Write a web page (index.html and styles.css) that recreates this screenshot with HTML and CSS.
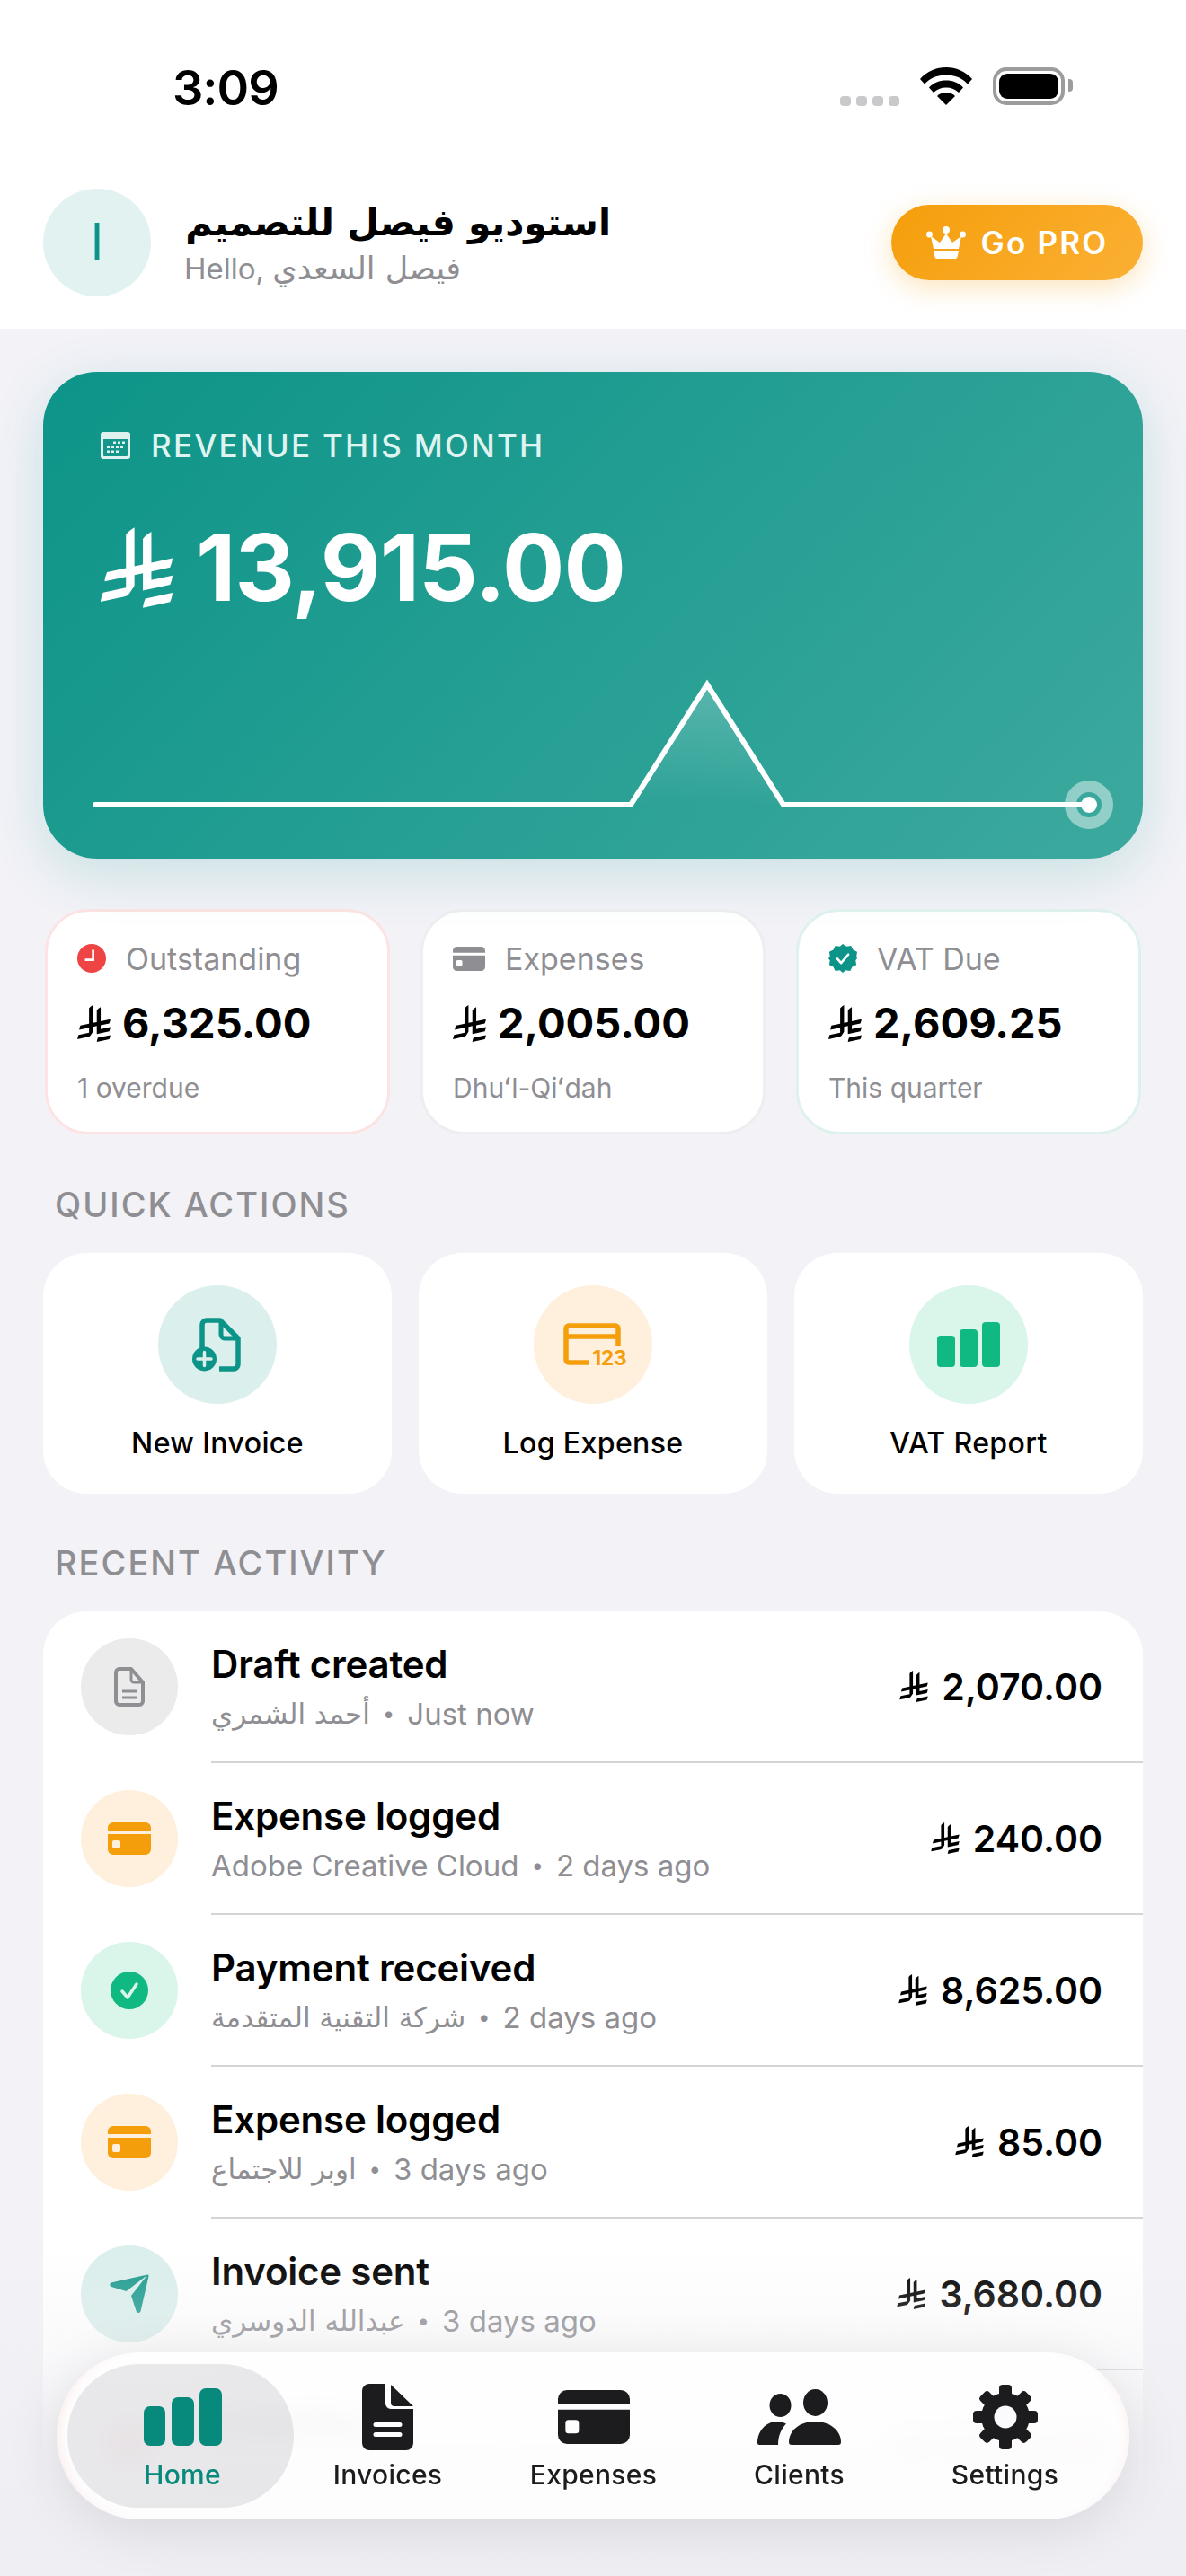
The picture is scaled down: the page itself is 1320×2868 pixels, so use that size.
FILE: index.html
```html
<!DOCTYPE html>
<html lang="en">
<head>
  <meta charset="UTF-8">
  <title>Home</title>
  <link rel="stylesheet" href="styles.css">
</head>

<body>
<svg class="hidden">
  <symbol id="sar" viewBox="0 0 1124.14 1256.39">
    <path d="M699.62,1113.02h0c-20.06,44.48-33.32,92.75-38.4,143.37l424.51-90.24c20.06-44.47,33.31-92.75,38.4-143.37l-424.51,90.24Z"/>
    <path d="M1085.73,895.8c20.06-44.47,33.32-92.75,38.4-143.37l-330.68,70.33v-135.2l292.27-62.11c20.06-44.47,33.32-92.75,38.4-143.37l-330.68,70.27V66.13c-50.67,28.45-95.67,66.32-132.25,110.99v403.35l-132.25,28.11V0c-50.67,28.44-95.67,66.32-132.25,110.99v525.69l-295.91,62.88c-20.06,44.47-33.33,92.75-38.42,143.37l334.33-71.05v170.26l-358.3,76.14c-20.06,44.47-33.32,92.75-38.4,143.37l375.04-79.7c30.53-6.35,56.77-24.4,73.83-49.24l68.78-101.97v-.02c7.14-10.55,11.3-23.27,11.3-36.97v-149.98l132.25-28.11v270.4l424.53-90.28Z"/>
  </symbol>
  <symbol id="card" viewBox="0 0 48 36">
    <path d="M0 9V6a6 6 0 0 1 6-6h36a6 6 0 0 1 6 6v3z"/>
    <path fill-rule="evenodd" d="M0 13h48v17a6 6 0 0 1-6 6H6a6 6 0 0 1-6-6zM7 20a2 2 0 0 0-2 2v5a2 2 0 0 0 2 2h5a2 2 0 0 0 2-2v-5a2 2 0 0 0-2-2z"/>
  </symbol>
</svg>

<div class="app">
  <div class="top">
    <div class="status-bar">
      <span class="time">3:09</span>
      <div class="status-icons">
        <span class="signal"><i></i><i></i><i></i><i></i></span>
        <svg class="wifi" viewBox="0 0 58 42">
          <path d="M29 0C18 0 8 4 0 13l5 5.500c6-6.500 14-10 24-10s18 3.500 24 10l5-5.500C50 4 40 0 29 0z"/>
          <path d="M29 14.500c-7.500 0-14 2.500-19 8l5 5.500c3.500-3.500 8.500-5.500 14-5.500s10.500 2 14 5.500l5-5.500c-5-5.500-11.500-8-19-8z"/>
          <path d="M29 28c-4 0-7.500 1.500-10 4l10 10 10-10c-2.500-2.500-6-4-10-4z"/>
        </svg>
        <span class="battery"><i></i></span>
      </div>
    </div>
    <header class="header">
      <div class="avatar"><span>ا</span></div>
      <div class="header-text">
        <div class="studio" dir="rtl">استوديو فيصل للتصميم</div>
        <div class="hello">Hello, <span class="ar">فيصل السعدي</span></div>
      </div>
      <button class="go-pro">
        <svg class="crown" viewBox="0 0 44 36" fill="#fff">
          <circle cx="22" cy="4" r="4"/><circle cx="3.500" cy="9" r="3.500"/><circle cx="40.500" cy="9" r="3.500"/>
          <path d="M22 8l7 10 10-7-3 14H8L5 11l10 7z"/>
          <path d="M8 28h28l-1.500 6a2.500 2.500 0 0 1-2.500 2H12a2.500 2.500 0 0 1-2.500-2z"/>
        </svg>
        Go PRO
      </button>
    </header>
  </div>

  <main class="content">
    <section class="hero">
      <div class="hero-label">
        <svg class="cal" viewBox="0 0 33 30">
          <path fill="#e0f2f0" d="M3 0h27a3 3 0 0 1 3 3v24a3 3 0 0 1-3 3H3a3 3 0 0 1-3-3V3a3 3 0 0 1 3-3z"/>
          <path fill="#14968a" d="M3 8h27v18a1 1 0 0 1-1 1H4a1 1 0 0 1-1-1z"/>
          <g fill="#e0f2f0">
            <rect x="14" y="10.500" width="3" height="2.500"/><rect x="19" y="10.500" width="3" height="2.500"/><rect x="24" y="10.500" width="3" height="2.500"/>
            <rect x="7" y="15.500" width="3" height="2.500"/><rect x="12" y="15.500" width="3" height="2.500"/><rect x="17" y="15.500" width="3" height="2.500"/><rect x="22" y="15.500" width="3" height="2.500"/>
            <rect x="7" y="20.500" width="3" height="2.500"/><rect x="12" y="20.500" width="3" height="2.500"/><rect x="17" y="20.500" width="3" height="2.500"/>
          </g>
        </svg>
        REVENUE THIS MONTH
      </div>
      <div class="hero-amount">
        <svg class="sar sar-hero"><use href="#sar"/></svg>
        13,915.00
      </div>
      <svg class="chart" viewBox="0 0 1224 542">
        <defs>
          <linearGradient id="peak" x1="0" y1="0" x2="0" y2="1">
            <stop offset="0" stop-color="#fff" stop-opacity=".22"/>
            <stop offset="1" stop-color="#fff" stop-opacity="0"/>
          </linearGradient>
        </defs>
        <path d="M654 482L739 348L824 482z" fill="url(#peak)"/>
        <path d="M58 482H654L739 348L824 482H1164" fill="none" stroke="#fff" stroke-width="6" stroke-linecap="round"/>
        <circle cx="1164" cy="482" r="20.500" fill="none" stroke="#fff" stroke-opacity=".45" stroke-width="13"/>
        <circle cx="1164" cy="482" r="9" fill="#fff"/>
      </svg>
    </section>

    <section class="stats">
      <div class="stat stat-red">
        <div class="stat-label">
          <svg class="stat-icon" viewBox="0 0 30 30"><circle cx="15" cy="15" r="15" fill="#ef4444"/><path d="M16.500 6v10.500H8" fill="none" stroke="#fff" stroke-width="2.500"/></svg>
          Outstanding
        </div>
        <div class="stat-value"><svg class="sar sar-stat"><use href="#sar"/></svg>6,325.00</div>
        <div class="stat-sub">1 overdue</div>
      </div>
      <div class="stat">
        <div class="stat-label">
          <svg class="stat-icon card-grey"><use href="#card"/></svg>
          Expenses
        </div>
        <div class="stat-value"><svg class="sar sar-stat"><use href="#sar"/></svg>2,005.00</div>
        <div class="stat-sub">Dhuʻl-Qiʻdah</div>
      </div>
      <div class="stat stat-teal">
        <div class="stat-label">
          <svg class="stat-icon" viewBox="0 0 34 34">
            <path fill="#0d9488" d="M17 0l4.500 3 5.300-.800 2.400 4.800 4.800 2.400-.800 5.300L34 17l-1.800 2.300.800 5.300-4.800 2.400-2.400 4.800-5.300-.800L17 34l-3.500-3-5.300.800L5.800 27 1 24.600l.8-5.300L0 17l1.800-2.300L1 9.400 5.800 7l2.400-4.800 5.300.800z"/>
            <path d="M10.500 17.500l4.500 5 8.500-10" fill="none" stroke="#fff" stroke-width="2.800" stroke-linecap="round" stroke-linejoin="round"/>
          </svg>
          VAT Due
        </div>
        <div class="stat-value"><svg class="sar sar-stat"><use href="#sar"/></svg>2,609.25</div>
        <div class="stat-sub">This quarter</div>
      </div>
    </section>

    <h2 class="section-title">QUICK ACTIONS</h2>
    <section class="actions">
      <div class="action">
        <div class="action-circle bg-teal">
          <svg class="action-icon" viewBox="0 0 56 60">
            <path d="M11 34V8a5 5 0 0 1 5-5h15l20 20v29a5 5 0 0 1-5 5H30" fill="none" stroke="#0d9488" stroke-width="5.500" stroke-linejoin="round"/>
            <path d="M32 3v16a4 4 0 0 0 4 4h15" fill="none" stroke="#0d9488" stroke-width="5"/>
            <circle cx="13.500" cy="46" r="13.500" fill="#0d9488"/>
            <path d="M13.500 38.500v15M6 46h15" stroke="#dcefec" stroke-width="3.500" stroke-linecap="round"/>
          </svg>
        </div>
        <div class="action-name">New Invoice</div>
      </div>
      <div class="action">
        <div class="action-circle bg-orange">
          <svg class="action-icon card-123" viewBox="0 0 70 49">
            <path d="M29 44H6a3 3 0 0 1-3-3V6a3 3 0 0 1 3-3h52a3 3 0 0 1 3 3v20" fill="none" stroke="#f59e0b" stroke-width="5.500"/>
            <path d="M3 15h58" stroke="#f59e0b" stroke-width="5.500"/>
            <text x="70" y="47" class="num-123">123</text>
          </svg>
        </div>
        <div class="action-name">Log Expense</div>
      </div>
      <div class="action">
        <div class="action-circle bg-green">
          <svg class="action-icon bars" viewBox="0 0 70 50" fill="#10b981">
            <rect x="0" y="15" width="20" height="35" rx="4"/><rect x="25" y="8" width="20" height="42" rx="4"/><rect x="50" y="0" width="20" height="50" rx="4"/>
          </svg>
        </div>
        <div class="action-name">VAT Report</div>
      </div>
    </section>

    <h2 class="section-title section-recent">RECENT ACTIVITY</h2>
    <section class="activity">
      <div class="row">
        <div class="row-circle bg-grey">
          <svg class="row-icon" viewBox="0 0 36 44">
            <path d="M3 6a4 4 0 0 1 4-4h13l13 15v21a4 4 0 0 1-4 4H7a4 4 0 0 1-4-4z" fill="none" stroke="#8e8e93" stroke-width="4" stroke-linejoin="round"/>
            <path d="M20 2v12a3 3 0 0 0 3 3h10M10 27h16M10 34h16" fill="none" stroke="#8e8e93" stroke-width="3"/>
          </svg>
        </div>
        <div class="row-main">
          <div class="row-title">Draft created</div>
          <div class="row-sub"><span class="ar">أحمد الشمري</span><b>•</b>Just now</div>
        </div>
        <div class="row-amount"><svg class="sar sar-row"><use href="#sar"/></svg>2,070.00</div>
      </div>
      <div class="row">
        <div class="row-circle bg-orange"><svg class="row-card"><use href="#card"/></svg></div>
        <div class="row-main">
          <div class="row-title">Expense logged</div>
          <div class="row-sub">Adobe Creative Cloud<b>•</b>2 days ago</div>
        </div>
        <div class="row-amount"><svg class="sar sar-row"><use href="#sar"/></svg>240.00</div>
      </div>
      <div class="row">
        <div class="row-circle bg-green">
          <svg class="row-icon check" viewBox="0 0 42 42"><circle cx="21" cy="21" r="21" fill="#10b981"/><path d="M13 22l6 7 10-15" fill="none" stroke="#dcf5ea" stroke-width="3.500" stroke-linecap="round" stroke-linejoin="round"/></svg>
        </div>
        <div class="row-main">
          <div class="row-title">Payment received</div>
          <div class="row-sub"><span class="ar">شركة التقنية المتقدمة</span><b>•</b>2 days ago</div>
        </div>
        <div class="row-amount"><svg class="sar sar-row"><use href="#sar"/></svg>8,625.00</div>
      </div>
      <div class="row">
        <div class="row-circle bg-orange"><svg class="row-card"><use href="#card"/></svg></div>
        <div class="row-main">
          <div class="row-title">Expense logged</div>
          <div class="row-sub"><span class="ar">اوبر للاجتماع</span><b>•</b>3 days ago</div>
        </div>
        <div class="row-amount"><svg class="sar sar-row"><use href="#sar"/></svg>85.00</div>
      </div>
      <div class="row">
        <div class="row-circle bg-teal">
          <svg class="row-icon plane" viewBox="0 0 44 44"><path fill="#0d9488" d="M42 .500a1.500 1.500 0 0 1 1.500 1.800l-9 39a2.500 2.500 0 0 1-4.700.300L24 24 42 1 18.500 19 2 14a2.500 2.500 0 0 1-.500-4.500z"/></svg>
        </div>
        <div class="row-main">
          <div class="row-title">Invoice sent</div>
          <div class="row-sub"><span class="ar">عبدالله الدوسري</span><b>•</b>3 days ago</div>
        </div>
        <div class="row-amount"><svg class="sar sar-row"><use href="#sar"/></svg>3,680.00</div>
      </div>
      <div class="row row-late">
        <div class="row-circle bg-red"><svg class="row-icon check" viewBox="0 0 42 42"><circle cx="21" cy="21" r="21" fill="#ef4444"/></svg></div>
        <div class="row-main">
          <div class="row-title">Overdue</div>
          <div class="row-sub"><span class="ar">استوديو فيصل</span><b>•</b>5 days ago</div>
        </div>
        <div class="row-amount"><svg class="sar sar-row"><use href="#sar"/></svg>2,645.00</div>
      </div>
    </section>
  </main>

  <div class="fade"></div>

  <nav class="tabbar">
    <div class="tab tab-active">
      <div class="tab-slot">
        <svg class="ic-home" viewBox="0 0 87 64" fill="#07897b">
          <rect x="0" y="20" width="24" height="44" rx="7"/><rect x="31" y="10" width="25" height="54" rx="7"/><rect x="62" y="0" width="25" height="64" rx="7"/>
        </svg>
      </div>
      <span>Home</span>
    </div>
    <div class="tab">
      <div class="tab-slot">
        <svg class="ic-doc" viewBox="0 0 57 74" fill="#1c1c1e">
          <path fill-rule="evenodd" d="M8 0H26V22a6 6 0 0 0 6 6H57V66a8 8 0 0 1-8 8H8a8 8 0 0 1-8-8V8a8 8 0 0 1 8-8zM15 43a2.500 2.500 0 0 0 0 5h27a2.500 2.500 0 0 0 0-5zM15 54a2.500 2.500 0 0 0 0 5h27a2.500 2.500 0 0 0 0-5z"/>
          <path d="M32 1L57 25H36a4 4 0 0 1-4-4z"/>
        </svg>
      </div>
      <span>Invoices</span>
    </div>
    <div class="tab">
      <div class="tab-slot">
        <svg class="ic-card" fill="#1c1c1e"><use href="#card"/></svg>
      </div>
      <span>Expenses</span>
    </div>
    <div class="tab">
      <div class="tab-slot">
        <svg class="ic-people" viewBox="0 0 93 62" fill="#1c1c1e">
          <ellipse cx="25.500" cy="18" rx="12" ry="13"/>
          <ellipse cx="64.500" cy="15" rx="13.500" ry="15"/>
          <path d="M2 62a2 2 0 0 1-2-2c0-13 9-24 22-24 4 0 7 1 10 2.500-5 5-9 13-9 23.500z"/>
          <path d="M38 62a3 3 0 0 1-3-3c0-13 12-23 29-23s29 10 29 23a3 3 0 0 1-3 3z"/>
        </svg>
      </div>
      <span>Clients</span>
    </div>
    <div class="tab">
      <div class="tab-slot">
        <svg class="ic-gear" viewBox="0 0 72 72" fill="#1c1c1e">
          <circle cx="36" cy="36" r="27"/>
          <rect x="29" y="0" width="14" height="18" rx="4"/>
          <rect x="29" y="0" width="14" height="18" rx="4" transform="rotate(45 36 36)"/>
          <rect x="29" y="0" width="14" height="18" rx="4" transform="rotate(90 36 36)"/>
          <rect x="29" y="0" width="14" height="18" rx="4" transform="rotate(135 36 36)"/>
          <rect x="29" y="0" width="14" height="18" rx="4" transform="rotate(180 36 36)"/>
          <rect x="29" y="0" width="14" height="18" rx="4" transform="rotate(225 36 36)"/>
          <rect x="29" y="0" width="14" height="18" rx="4" transform="rotate(270 36 36)"/>
          <rect x="29" y="0" width="14" height="18" rx="4" transform="rotate(315 36 36)"/>
          <circle cx="36" cy="36" r="12.500" fill="#fbfbfd"/>
        </svg>
      </div>
      <span>Settings</span>
    </div>
  </nav>
</div>
</body>
</html>
```

FILE: styles.css
```css
* {
  margin: 0;
  padding: 0;
  box-sizing: border-box;
}

html,
body {
  width: 1320px;
  height: 2868px;
  overflow: hidden;
}

body {
  font-family: Inter, "DejaVu Sans", sans-serif;
  color: #000;
}

.hidden {
  position: absolute;
  width: 0;
  height: 0;
}

.ar {
  font-family: "DejaVu Sans", sans-serif;
}

.app {
  position: relative;
  width: 1320px;
  height: 2868px;
  overflow: hidden;
  background: #f2f2f7;
}

/* status bar + header */
.top {
  height: 366px;
  background: #fff;
}

.status-bar {
  height: 210px;
  display: flex;
  justify-content: space-between;
  padding: 66px 122px 0 192px;
}

.time {
  font-size: 54px;
  font-weight: 600;
  line-height: 64px;
  letter-spacing: -1px;
}

.status-icons {
  display: flex;
  align-items: flex-start;
  padding-top: 9px;
}

.signal {
  display: flex;
  gap: 6px;
  margin: 32px 23px 0 0;
}

.signal i {
  width: 12px;
  height: 11px;
  border-radius: 4px;
  background: #c9c9cb;
}

.wifi {
  width: 58px;
  height: 42px;
  margin-right: 23px;
}

.battery {
  position: relative;
  width: 80px;
  height: 42px;
  margin-right: 13px;
  padding: 3px;
  border: 4px solid #9c9c9c;
  border-radius: 15px;
}

.battery::after {
  content: "";
  position: absolute;
  top: 9px;
  right: -13px;
  width: 5px;
  height: 14px;
  border-radius: 0 4px 4px 0;
  background: #9c9c9c;
}

.battery i {
  display: block;
  width: 100%;
  height: 100%;
  border-radius: 9px;
  background: #000;
}

.header {
  display: flex;
  align-items: flex-start;
  padding: 0 48px;
}

.avatar {
  width: 120px;
  height: 120px;
  display: flex;
  align-items: center;
  justify-content: center;
  border-radius: 50%;
  background: #e1f2f0;
  color: #0d9488;
  font-family: "DejaVu Sans", sans-serif;
  font-size: 54px;
}

.header-text {
  flex: 1;
  margin-left: 37px;
  padding-top: 8px;
}

.studio {
  font-family: "DejaVu Sans", sans-serif;
  font-size: 41px;
  font-weight: 700;
  line-height: 60px;
  width: 475px;
  white-space: nowrap;
}

.hello {
  font-size: 33px;
  line-height: 42px;
  color: #8e8e93;
}

.hello .ar {
  font-size: 35px;
}

.go-pro {
  width: 280px;
  height: 84px;
  margin-top: 18px;
  display: flex;
  align-items: center;
  justify-content: center;
  gap: 17px;
  border: 0;
  border-radius: 42px;
  background: linear-gradient(135deg, #f59e0b, #fbb034);
  box-shadow: 0 8px 30px rgba(245, 158, 11, 0.28);
  color: #fff;
  font-family: inherit;
  font-size: 35px;
  font-weight: 600;
  letter-spacing: 2.2px;
}

.crown {
  width: 44px;
  height: 36px;
}

/* main column */
.content {
  padding: 48px 48px 0;
}

.hero {
  position: relative;
  height: 542px;
  padding: 62px 64px 0;
  border-radius: 60px;
  background: linear-gradient(135deg, #0d9488, #3da99e);
  box-shadow: 0 16px 60px rgba(13, 148, 136, 0.18);
  color: #fff;
}

.hero-label {
  display: flex;
  align-items: center;
  gap: 23px;
  height: 40px;
  font-size: 35px;
  font-weight: 500;
  letter-spacing: 2.3px;
  color: #dff3f0;
}

.cal {
  width: 33px;
  height: 30px;
}

.hero-amount {
  display: flex;
  align-items: center;
  gap: 26px;
  margin-top: 56px;
  font-size: 103px;
  font-weight: 700;
  line-height: 120px;
  letter-spacing: -1px;
}

.sar {
  fill: currentColor;
  flex: none;
}

.sar-hero {
  width: 80px;
  height: 90px;
}

.chart {
  position: absolute;
  left: 0;
  top: 0;
  width: 100%;
  height: 100%;
}

.stats {
  display: grid;
  grid-template-columns: repeat(3, 1fr);
  gap: 34px;
  margin-top: 56px;
  padding: 0 2px;
}

.stat {
  height: 251px;
  padding: 32px 33px 0;
  border: 3px solid #eeeef0;
  border-radius: 48px;
  background: #fff;
}

.stat-red {
  border-color: #fde3e3;
}

.stat-teal {
  border-color: #dff1ee;
}

.stat-label {
  display: flex;
  align-items: center;
  gap: 22px;
  height: 40px;
  font-size: 34px;
  color: #8e8e93;
}

.stat-icon {
  width: 32px;
  height: 32px;
  flex: none;
}

.card-grey {
  width: 36px;
  height: 27px;
  fill: #8e8e93;
}

.stat-value {
  display: flex;
  align-items: center;
  gap: 13px;
  margin-top: 23px;
  font-size: 47px;
  font-weight: 700;
  line-height: 58px;
}

.sar-stat {
  width: 37px;
  height: 41px;
}

.stat-sub {
  margin-top: 25px;
  font-size: 30px;
  line-height: 36px;
  color: #8e8e93;
}

.section-title {
  margin: 55px 0 31px 13px;
  font-size: 38px;
  font-weight: 500;
  line-height: 46px;
  letter-spacing: 2px;
  color: #8e8e93;
}

.section-recent {
  margin-top: 54px;
}

.actions {
  display: grid;
  grid-template-columns: repeat(3, 1fr);
  gap: 30px;
}

.action {
  height: 268px;
  padding-top: 36px;
  display: flex;
  flex-direction: column;
  align-items: center;
  border-radius: 48px;
  background: #fff;
}

.action-circle {
  width: 132px;
  height: 132px;
  display: flex;
  align-items: center;
  justify-content: center;
  border-radius: 50%;
}

.action-icon {
  width: 56px;
  height: 60px;
  overflow: visible;
}

.action-icon.card-123 {
  width: 70px;
  height: 49px;
  margin-left: 4px;
}

.action-icon.bars {
  width: 70px;
  height: 50px;
}

.num-123 {
  font-family: Inter, sans-serif;
  font-size: 23px;
  font-weight: 700;
  letter-spacing: -0.5px;
  fill: #f59e0b;
  text-anchor: end;
}

.action-name {
  margin-top: 24px;
  font-size: 32px;
  font-weight: 500;
  line-height: 40px;
  letter-spacing: 0.4px;
}

.bg-teal {
  background: #dbefec;
}

.bg-orange {
  background: #fef0dc;
}

.bg-green {
  background: #daf5ea;
}

.bg-grey {
  background: #ebebec;
}

.bg-red {
  background: #fde3e3;
}

/* activity list runs on under the tab bar */
.activity {
  border-radius: 48px;
  background: #fff;
}

.row {
  position: relative;
  height: 169px;
  display: flex;
  align-items: center;
  padding: 0 45px 2px 42px;
}

.row::after {
  content: "";
  position: absolute;
  left: 187px;
  right: 0;
  bottom: 0;
  height: 2px;
  background: #d4d4d6;
}

.row-late::after {
  display: none;
}

.row-circle {
  width: 108px;
  height: 108px;
  flex: none;
  display: flex;
  align-items: center;
  justify-content: center;
  border-radius: 50%;
}

.row-icon {
  width: 36px;
  height: 44px;
}

.row-icon.check {
  width: 42px;
  height: 42px;
}

.row-icon.plane {
  width: 44px;
  height: 44px;
  opacity: 0.92;
}

.row-card {
  width: 48px;
  height: 36px;
  fill: #f59e0b;
}

.row-main {
  flex: 1;
  margin-left: 37px;
}

.row-title {
  font-size: 42px;
  font-weight: 600;
  line-height: 52px;
  letter-spacing: -0.2px;
}

.row-sub {
  display: flex;
  align-items: center;
  margin-top: 8px;
  font-size: 33px;
  line-height: 42px;
  color: #8e8e93;
}

.row-sub .ar {
  font-size: 31px;
}

.row-sub b {
  margin: 0 14px;
  font-size: 24px;
  font-weight: 400;
}

.row-amount {
  display: flex;
  align-items: center;
  gap: 15px;
  font-size: 41px;
  font-weight: 600;
}

.sar-row {
  width: 32px;
  height: 35px;
}

.row-late .row-amount {
  color: #ef4444;
}

/* scroll fade + floating tab bar */
.fade {
  position: absolute;
  left: 0;
  right: 0;
  top: 2500px;
  bottom: 0;
  background: linear-gradient(rgba(238, 238, 242, 0), rgba(238, 238, 242, 0.3) 30%, rgba(238, 238, 243, 0.8) 65%, rgba(238, 238, 243, 0.98) 85%);
}

.tabbar {
  position: absolute;
  left: 63px;
  top: 2619px;
  width: 1194px;
  height: 186px;
  display: grid;
  grid-template-columns: repeat(5, 229px);
  align-items: center;
  padding-left: 25px;
  border-radius: 93px;
  background: rgba(255, 255, 255, 0.86);
  backdrop-filter: blur(14px);
  box-shadow: 0 10px 60px rgba(0, 0, 0, 0.1), inset 12px 0 12px -9px rgba(239, 68, 68, 0.1), inset -12px 0 12px -9px rgba(239, 68, 68, 0.06);
}

.tab {
  height: 160px;
  display: flex;
  flex-direction: column;
  align-items: center;
  border-radius: 80px;
  padding-top: 22px;
  color: #1c1c1e;
  font-size: 30px;
  font-weight: 500;
  letter-spacing: 0.3px;
}

.tab-active {
  margin: 0 -10px 0 -13px;
  padding-left: 4px;
  background: rgba(120, 120, 128, 0.16);
  color: #07897b;
}

.tab-slot {
  height: 74px;
  display: flex;
  align-items: center;
}

.ic-home {
  width: 87px;
  height: 64px;
}

.ic-doc {
  width: 57px;
  height: 74px;
}

.ic-card {
  width: 80px;
  height: 60px;
}

.ic-people {
  width: 93px;
  height: 62px;
}

.ic-gear {
  width: 72px;
  height: 72px;
}

.tab span {
  margin-top: 8px;
  line-height: 38px;
}
```
